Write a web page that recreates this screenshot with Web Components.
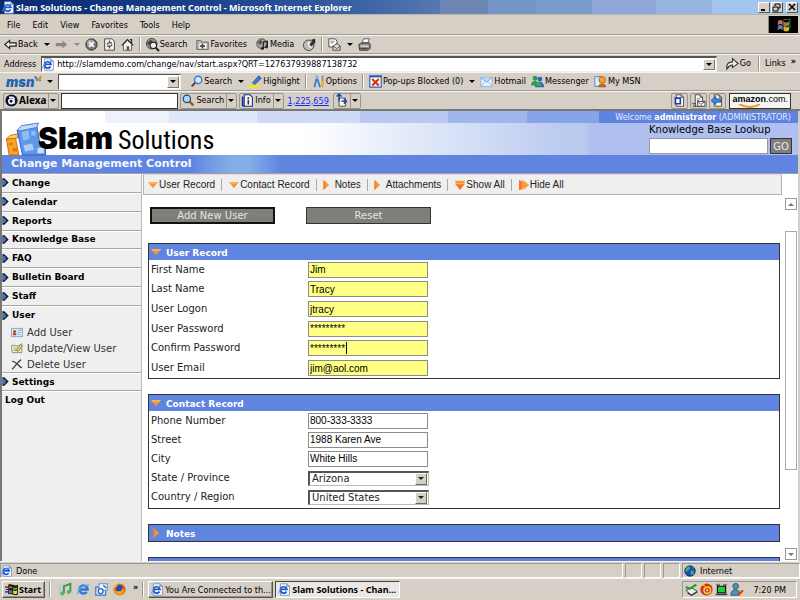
<!DOCTYPE html>
<html lang="en">
<head>
<meta charset="utf-8">
<title>Slam Solutions - Change Management Control</title>
<style>
html,body{margin:0;height:100%}
body{--face:#d6cfc5;--blue:#6085e0;--ui:"DejaVu Sans Condensed","DejaVu Sans",sans-serif;--uibold:"Noto Sans","Open Sans",sans-serif;--page:"DejaVu Sans",sans-serif;--arial:"Liberation Sans",Arial,sans-serif;font-family:var(--ui);font-size:9px;color:#000;background:var(--face);overflow:hidden}
</style>
</head>
<body>
<desktop-shell></desktop-shell>
<script>
const ie='<path d="M3 1h8l3 3v11H3z" fill="#fff" stroke="#6d86b5"/><path d="M11 1v3h3" fill="none" stroke="#6d86b5"/><path d="M10.500 10.500A4 4 0 1 1 11 7.800H4" fill="none" stroke="#1c55cc" stroke-width="2.200"/><path d="M1 13C0 9 7 3 13 4" fill="none" stroke="#4b9bea" stroke-width="1.200"/>';
const pageIcon='<path d="M4 1h6l3 3v11H4z" fill="#fff" stroke="#333"/><path d="M10 1v3h3" fill="none" stroke="#333"/>';
const ICONS={
ie,
blueE:'<path d="M12 11A5 5 0 1 1 13 8H4" fill="none" stroke="#2a78d8" stroke-width="3"/><path d="M1 14C-1 9 8 1 15 3" fill="none" stroke="#5ab0f0" stroke-width="1.500"/>',
back:'<path d="M1 8l6-5v3h8v4H7v3z" fill="#f4f2ee" stroke="#222" stroke-width="1.400"/>',
fwd:'<path d="M15 8L9 3v3H1v4h8v3z" fill="#8b8881"/>',
stop:'<circle cx="8" cy="8" r="7" fill="#777" stroke="#222"/><circle cx="7" cy="6.500" r="4.500" fill="#aaa"/><path d="M5 5l6 6M11 5l-6 6" stroke="#fff" stroke-width="1.800"/>',
refresh:'<path d="M2 1h9l3 3v11H2z" fill="#eee" stroke="#333"/><path d="M8 3v3h3M8 13v-3H5M8 6a3 3 0 0 0-3 2M8 10a3 3 0 0 0 3-2" fill="none" stroke="#444" stroke-width="1.300"/>',
home:'<path d="M1 9l7-7 7 7" fill="none" stroke="#222" stroke-width="1.500"/><path d="M3 8v7h10V8L8 3z" fill="#f5f5f5" stroke="#444"/><path d="M7 10h3v5H7z" fill="#555"/><path d="M11 2h2v4" fill="none" stroke="#333" stroke-width="1.500"/>',
globeSearch:'<circle cx="7" cy="7" r="6.500" fill="#999" stroke="#333"/><path d="M1 6l5-4 2 2-5 5z" fill="#444"/><circle cx="9" cy="9" r="4" fill="#eee" stroke="#222" stroke-width="1.400"/><path d="M12 12l4 4" stroke="#222" stroke-width="2.400"/>',
favs:'<path d="M1 3h5l1 2h8v9H1z" fill="#bbb" stroke="#555"/><path d="M4 7h9v6H4z" fill="#f3f3f3"/><path d="M8 7v6M5 10h6" stroke="#444" stroke-width="2"/>',
media:'<circle cx="7" cy="7" r="6" fill="#aaa" stroke="#333"/><path d="M2 5l4-3 2 3-3 4z" fill="#555"/><path d="M9 13V5l5-1v7" fill="none" stroke="#222" stroke-width="1.500"/><circle cx="8" cy="13" r="1.800" fill="#222"/><circle cx="13" cy="11" r="1.800" fill="#222"/>',
history:'<circle cx="7" cy="9" r="6.500" fill="#bbb" stroke="#333"/><path d="M7 9l6-7 2 4-5 4z" fill="#333"/><path d="M7 5v4l3 3" fill="none" stroke="#fff" stroke-width="1.800"/><path d="M10 2l5-1v5z" fill="#222"/>',
mail:'<path d="M1 1h8l2 3v7H1z" fill="#fff" stroke="#333"/><path d="M3 4h5M3 6h4" stroke="#777"/><path d="M6 10l5-3 4 3v5H6z" fill="#ddd" stroke="#333"/><path d="M6 10l5 3 4-3" fill="none" stroke="#444"/>',
print:'<path d="M5 6l2-5h7l-2 5z" fill="#fff" stroke="#444"/><path d="M1 8l3-2h10l1 2v5l-3 2H2z" fill="#888" stroke="#222"/><path d="M3 10h10" stroke="#eee" stroke-width="1.500"/><path d="M3 13h9" stroke="#333"/>',
go:'<path d="M1 15C0 9 3 6 8 6V2l7 6-7 5v-3c-4 0-5 2-7 5z" fill="#eee" stroke="#333" stroke-width="1.300"/>',
mag:'<path d="M7 9l-5 5" stroke="#6a3f20" stroke-width="2.500"/><circle cx="10" cy="6" r="4.500" fill="#cfe7ff" stroke="#3c78d8" stroke-width="1.700"/>',
magDark:'<circle cx="6" cy="6" r="4.500" fill="#a8dcf5" stroke="#1c4a80" stroke-width="1.500"/><path d="M9 9l5 5" stroke="#a05a20" stroke-width="3"/>',
pen:'<path d="M1 12h12v3H1z" fill="#ffe800"/><path d="M4 10l8-9 3 3-8 8z" fill="#3c78d8" stroke="#24489c"/><path d="M4 10l3 2-5 2z" fill="#f8d800"/>',
tools:'<path d="M3 15L6 3l4 12" fill="none" stroke="#3576d0" stroke-width="2"/><circle cx="6" cy="3" r="2" fill="#7db4f0"/><path d="M13 1v7" stroke="#888" stroke-width="2"/><path d="M13 8v7" stroke="#f0b010" stroke-width="3"/>',
popup:'<path d="M1 1h14v14H1z" fill="#fff" stroke="#2c5fc0" stroke-width="1.500"/><path d="M1 2h14" stroke="#2c5fc0" stroke-width="2"/><path d="M4 5l8 8M12 5l-8 8" stroke="#e02810" stroke-width="2.500"/>',
hotmail:'<path d="M1 3h14v11H1z" fill="#eaf4ff" stroke="#83aee8"/><path d="M1 3l7 6 7-6" fill="#bcd8fa" stroke="#5d91dd"/><path d="M1 14l5-6M15 14l-5-6" stroke="#83aee8"/>',
msgr:'<circle cx="5" cy="4" r="3" fill="#2f9c45"/><path d="M0 13c0-8 9-8 10 0z" fill="#2f9c45"/><circle cx="11" cy="5" r="3" fill="#2c62c8"/><path d="M5 15c0-9 11-9 11 0z" fill="#2c62c8"/><path d="M6 13c0-6 7-6 7 1z" fill="#38b04c"/>',
mymsn:'<path d="M1 2h9v12H1z" fill="#dcecff" stroke="#3a78d0"/><circle cx="10" cy="6" r="4" fill="#f6a21c" stroke="#b85b10"/><path d="M5 15c0-6 10-6 10 0z" fill="#e44c20"/><path d="M8 11l2 4 2-4z" fill="#3cae4a"/>',
info:'<path d="M2 3v11l2 1" fill="none" stroke="#1428a0" stroke-width="2"/><path d="M4 1h7l3 3v11H4z" fill="#fffbd8" stroke="#1428a0" stroke-width="1.300"/><path d="M9 7v6M9 4v2" stroke="#1428a0" stroke-width="2"/>',
related:'<path d="M5 5h8v10H5z" fill="#fffbd8" stroke="#333"/><path d="M5 0v9M2 3l3-3 3 3M8 9h6M11 6l3 3-3 3" fill="none" stroke="#1840c8" stroke-width="1.800"/>',
alexa1:pageIcon+'<path d="M3 5h6v7H3z" fill="#fff" stroke="#1c3aa8" stroke-width="2"/>',
alexa2:pageIcon+'<path d="M6 6h4M6 8h2" stroke="#555"/><path d="M7 9h9v6H7z" fill="#fff" stroke="#222"/><path d="M7 9l4 4 5-4M0 12h5M1 15h4" fill="none" stroke="#222"/>',
alexa3:pageIcon.replace('#fff','#fffbd8')+'<path d="M0 8l6-5v3h6v4H6v3z" fill="#3c86e8" stroke="#1748a8"/>',
win:'<path d="M1 4c3-2 4-2 6 0v5c-2-2-3-2-6 0z" fill="#b07860"/><path d="M8 4c2 2 4 2 7 0v5c-3 2-5 2-7 0z" fill="#3cae3a"/><path d="M8 4c1 1 2 2 3 2v5c-1 0-2 0-3-1z" fill="#e85030"/><path d="M1 10c3-2 4-2 6 0v5c-2-2-3-2-6 0z" fill="#5c80b8"/><path d="M8 10c2 2 4 2 7 0v5c-3 2-5 2-7 0z" fill="#d8b828"/><path d="M7 3c3-3 6 1 9-2v11" fill="none" stroke="#777"/>',
start:'<path d="M0 5h4M1 8h3M0 11h4" stroke="#222" stroke-width="1.500"/><path d="M4 2c4-2 8 3 12 0v12c-4 3-8-2-12 0z" fill="#111"/><path d="M5 4c2-1 3 0 4 0v3c-1 0-2-1-4 0z" fill="#f04020"/><path d="M10 5c2 1 3 1 5 0v3c-2 1-3 1-5 0z" fill="#38b038"/><path d="M5 9c2-1 3 0 4 0v4c-1 0-2-1-4 0z" fill="#3078e8"/><path d="M10 9c2 1 3 1 5 0v4c-2 1-3 1-5 0z" fill="#f8d020"/>',
down:'<path d="M0 3h16L8 13z" fill="#f5952c"/><path d="M0 3h16l-2 3H3z" fill="#f8b45c"/>',
right:'<path d="M4 0l9 8-9 8z" fill="#f59a35"/><path d="M4 0v16l3-3V3z" fill="#f08420"/>',
downs:'<path d="M0 1h16l-2 6H2z" fill="#f59a35"/><path d="M0 6h16L8 16z" fill="#f07a1c"/><path d="M1 6h14" stroke="#fbc070" stroke-width="1.500"/>',
rights:'<path d="M0 0l4 1 5 7-5 7-4 1z" fill="#f07a1c"/><path d="M6 0l10 8-10 8z" fill="#f59a35" stroke="#fbc070"/>',
nav:'<path d="M0 0l4 1 7 7-7 7-4 1z" fill="#0c1c3c"/><path d="M1 3l3 1 3 4-3 4-3 1z" fill="#3f76b8"/>',
card:'<path d="M0 2h16v12H0z" fill="#dcebfa" stroke="#6a88b0"/><path d="M2 12V9h5v3z" fill="#c03818"/><circle cx="4.500" cy="6.500" r="2.200" fill="#a85020"/><path d="M9 5h5M9 8h5M9 11h4" stroke="#6a98d0"/><path d="M12 3h3v3z" fill="#f8c040"/>',
edit:'<path d="M0 4l5-1 1 1h9v10H1z" fill="#f6f1c8" stroke="#666"/><path d="M3 7h6M3 9h4M3 11h5" stroke="#8a9a70"/><path d="M7 11l6-9 3 2-6 8z" fill="#f0e048" stroke="#555"/><path d="M12 2l3-2 1 3z" fill="#60b050"/>',
del:'<path d="M1 3c6 1 9 7 14 10M14 1C9 4 6 10 1 15" fill="none" stroke="#444" stroke-width="2"/>',
note:'<path d="M6 13V4l8-3v10" fill="none" stroke="#3f9a50" stroke-width="2.400"/><circle cx="4" cy="13" r="2.600" fill="#58b868"/><circle cx="12" cy="11" r="2.600" fill="#58b868"/><path d="M1 2v10" stroke="#a8c4e8" stroke-width="2"/>',
outlook:'<path d="M1 5h12v10H1z" fill="#eaf4ff" stroke="#3078c8" stroke-width="1.500"/><path d="M5 1h10v8H5z" fill="#fff" stroke="#3078c8"/><circle cx="7" cy="10" r="3" fill="#fff" stroke="#2060c0" stroke-width="1.500"/><path d="M10 3l4 3" stroke="#3078c8" stroke-width="2"/>',
firefox:'<circle cx="8" cy="8" r="7.500" fill="#e86a10"/><circle cx="8" cy="7" r="4.600" fill="#2850a8"/><path d="M1 6c1 5 5 4 7 4s4-2 3-4c3 1 3 6-1 8-5 2-9-2-9-8z" fill="#f8a020"/><path d="M1 7C1 3 4 1 6 1L5 4z" fill="#f8b828"/>',
globe:'<circle cx="8" cy="8" r="7" fill="#1c48c0" stroke="#0a2060"/><path d="M3 4c3-3 5-2 5 0S5 7 4 9 1 8 3 4zM9 8c3-2 5 0 4 3s-4 3-4 0zM10 2l3 2-2 1z" fill="#40b848"/>',
safe:'<path d="M1 9l7-3 7 4-7 5z" fill="#eee" stroke="#333"/><path d="M1 5l5 2 8-5" fill="none" stroke="#18a028" stroke-width="2.500"/><path d="M3 12l5 3 7-4" fill="none" stroke="#333" stroke-width="1.500"/>',
alarm:'<circle cx="8" cy="8" r="7.500" fill="#d83018"/><circle cx="9" cy="9" r="5" fill="#f8c838"/><circle cx="9" cy="9" r="3" fill="#d83018"/><circle cx="9" cy="9" r="1.200" fill="#fff"/><path d="M2 2l4 1" stroke="#f8c838" stroke-width="2"/>',
net:'<path d="M2 1l2 4M14 1l-2 4M5 1v3M11 1v3" stroke="#222" stroke-width="1.200"/><path d="M3 4h10v8H3z" fill="#20d040" stroke="#111" stroke-width="1.500"/><path d="M1 13h14v2H1z" fill="#333"/>',
buddy:'<circle cx="7" cy="4" r="3.500" fill="#5890b8" stroke="#24506c"/><path d="M1 15c0-9 11-9 11 0z" fill="#5890b8" stroke="#24506c"/><path d="M10 15l6-6" stroke="#e02020" stroke-width="2"/><path d="M12 16l4-3" stroke="#f8d020" stroke-width="2"/><path d="M9 11l3-2" stroke="#30b040" stroke-width="2"/>',
alexaA:'<circle cx="8" cy="8" r="7.500" fill="#0b1038"/><circle cx="7.500" cy="9" r="2.800" fill="none" stroke="#fff" stroke-width="2"/><path d="M5 4h4c2 0 2 1 2 3v5" fill="none" stroke="#fff" stroke-width="2"/>',
butterfly:'<path d="M8 8C4 0 0 1 1 5c1 3 4 4 7 5z" fill="#2f78d0"/><path d="M9 8c1-8 6-8 6-4s-3 6-6 6z" fill="#f08a1c"/><path d="M9 9c4-1 6 0 5 3-2 3-5 0-5-3z" fill="#3cae4a"/><path d="M8 9c-3-1-5 1-3 3 2 1 3-1 3-3z" fill="#e04828"/>',
cubes:'<path d="M1 18l10-2 4 20H4z" fill="#f8a820" stroke="#c85c18"/><path d="M1 18l4-4 10-2-2 5z" fill="#fdd060" stroke="#c85c18"/><path d="M4 22h4v3H4zM8 28h5v4H8z" fill="#e87818"/><path d="M13 8l22-5 4 22 6 3v8H19z" fill="#5f97ea" stroke="#2458c0"/><path d="M13 8l5-5 19-3-2 5-19 4z" fill="#c4dcfb" stroke="#3a70d4"/><path d="M18 10l8-2 1 10-7 2zM29 9h5v5h-5z" fill="#8fbcf6"/><path d="M20 25l10-2 2 7-10 2z" fill="#a9ccfa"/><path d="M36 28h7v6h-7z" fill="#cfe0fa"/>'
};
const BOXES={cubes:'0 0 46 36',nav:'0 0 11 16'};
function define(name,css,html,after){
  const t=document.createElement('template');
  t.innerHTML='<style>*{box-sizing:border-box}'+css+'</style>'+html;
  customElements.define(name,class extends HTMLElement{
    constructor(){super();this.attachShadow({mode:'open'})}
    connectedCallback(){if(this.shadowRoot.childNodes.length)return;this.shadowRoot.append(t.content.cloneNode(true));if(after)after(this,this.shadowRoot)}
  });
}
define('ui-icon',':host{display:inline-flex;flex:none;width:13px;height:13px}svg{width:100%;height:100%;overflow:visible}','<svg viewBox="0 0 16 16" aria-hidden="true"></svg>',(el,r)=>{
  const s=r.querySelector('svg'),n=el.getAttribute('name');if(BOXES[n])s.setAttribute('viewBox',BOXES[n]);s.innerHTML=ICONS[n]||'';
});
define('drop-arrow',':host{display:inline-block;flex:none;width:0;height:0;border:3px solid transparent;border-top-color:currentColor;border-bottom:0}','');
define('tool-sep',':host{display:block;flex:none;width:2px;height:15px;border-left:1px solid #9b968c;border-right:1px solid #fff}','');
define('tool-row',':host{display:flex;align-items:center;flex:none;border-top:1px solid #f6f4f0;border-bottom:1px solid #a19c93;height:19px;padding:0 4px;white-space:nowrap}','<slot></slot>');
define('tool-button',':host{display:flex;flex:none}button{display:flex;align-items:center;gap:1px;padding:0;margin:0;border:0;background:none;font:inherit;color:inherit;white-space:nowrap;line-height:13px}:host([framed]) button{border:1px solid #9b968c;border-radius:2px;height:16px;padding:0 1px}.arrow{display:flex;align-items:center;padding-left:5px}:host([framed]) .arrow{height:14px;padding:0 1px;margin-left:1px;border-left:1px solid #9b968c}','<button type="button"><ui-icon></ui-icon><slot></slot></button>',(el,r)=>{
  const b=r.querySelector('button'),i=r.querySelector('ui-icon'),n=el.getAttribute('icon');
  if(n){const x=document.createElement('ui-icon');x.setAttribute('name',n);i.replaceWith(x)}else i.remove();
  if(el.hasAttribute('label'))b.setAttribute('aria-label',el.getAttribute('label'));
  if(el.hasAttribute('drop')){const s=document.createElement('span');s.className='arrow';s.append(document.createElement('drop-arrow'));b.append(s)}
});
define('combo-field',':host{display:flex;height:16px;background:#fff;border:1px solid #555;border-right-color:#eee;border-bottom-color:#eee}input{flex:1;min-width:0;width:10px;border:0;padding:0 2px;margin:0;background:none;font:inherit;outline:0}button{width:12px;padding:0;margin:1px;border:1px solid #777;border-top-color:#fff;border-left-color:#fff;background:var(--face);display:flex;align-items:center;justify-content:center}','<slot name="icon"></slot><input type="text"><button type="button" aria-label="Open list"><drop-arrow></drop-arrow></button>',(el,r)=>{
  const i=r.querySelector('input');i.setAttribute('aria-label',el.getAttribute('label'));i.value=el.getAttribute('value')||'';if(el.hasAttribute('plain'))r.querySelector('button').remove();
});
define('title-bar',`:host{display:flex;align-items:center;flex:none;height:15px;padding:0 2px;gap:1px;color:#fff;font:700 9px/13px var(--uibold);white-space:nowrap;border-bottom:1px solid #b9b6ae;
background:linear-gradient(90deg,#0c2a72 0,#12347c 12%,#1c4289 26%,#2c5499 38%,#4067a6 47%,#5878b2 55%,#6d87b4 55% 61%,#7494c6 61% 67%,#7b9ccb 67% 74%,#8ea9d8 74% 82%,#98b5e1 82% 89%,#a2c4ee 89%)}
h1{font:inherit;margin:0;flex:1}button{width:12px;height:11px;padding:0;border:1px solid #555;border-top-color:#fff;border-left-color:#fff;background:var(--face);display:flex}button:last-child{margin-left:2px}svg{width:10px;height:9px}`,
`<ui-icon name="ie"></ui-icon><h1>Slam Solutions - Change Management Control - Microsoft Internet Explorer</h1>
<button type="button" aria-label="Minimize"><svg viewBox="0 0 10 9"><path d="M2 7h4" stroke="#000" stroke-width="2"/></svg></button><button type="button" aria-label="Restore"><svg viewBox="0 0 10 9"><path d="M3 3V1h5v4H6M1 4h5v4H1z" fill="none" stroke="#000"/></svg></button><button type="button" aria-label="Close"><svg viewBox="0 0 10 9"><path d="M2 1l6 6M8 1L2 7" stroke="#000" stroke-width="1.500"/></svg></button>`);
define('menu-bar',':host{display:flex;flex:none;height:20px;padding:1px 2px 1px 1px;border-bottom:1px solid #a19c93}nav{display:flex;flex:1;align-items:center;gap:12px;padding-left:6px;border-right:1px solid #8d887f}button{border:0;padding:0;background:none;font:inherit}div{width:29px;background:#000;display:flex;align-items:center;justify-content:center}',
'<nav><button>File</button><button>Edit</button><button>View</button><button>Favorites</button><button>Tools</button><button>Help</button></nav><div><ui-icon name="win"></ui-icon></div>');
define('address-bar',':host{display:flex;flex:none;align-items:center;height:18px;padding:0 4px;gap:5px;border-top:1px solid #f6f4f0;white-space:nowrap}combo-field{flex:1;border-color:#555 #eee #eee #555;border-top-width:2px}.go{margin:0 2px 0 4px}.more{font-weight:700;line-height:12px;align-self:flex-start}',
'<span>Address</span><combo-field label="Address" value="http://slamdemo.com/change/nav/start.aspx?QRT=127637939887138732"><ui-icon slot="icon" name="ie"></ui-icon></combo-field><tool-button class="go" icon="go">Go</tool-button><tool-sep></tool-sep><tool-button>Links</tool-button><span class="more">»</span>');
define('browser-chrome',`:host{display:block;flex:none;border-bottom:2px solid #777}
.std{gap:5px}.msn{gap:5px;padding-left:6px}.alexa{gap:2px;height:18px;border-bottom:0;padding-left:3px}
.wide{margin-left:4px}
.brand{display:flex;align-items:center;font:italic 900 13px/16px Inter,var(--arial);color:#1b64b0}.brand ui-icon{width:8px;height:10px;margin-bottom:5px}
.msn combo-field{width:123px}.alexa combo-field{width:117px;border-color:#333}.alexaname{font:700 10px/13px var(--uibold)}
a{color:#0c2cff;margin:0 2px}.fill{flex:1}
.amazon{display:flex;flex-direction:column;border:1px solid #333;background:#f4f4f4;height:16px;padding:0 2px;font:9px/10px var(--arial);color:#000;margin:0 5px 0 1px}.amazon svg{width:34px;height:4px;margin-left:6px}`,
`<menu-bar></menu-bar>
<tool-row class="std"><tool-button icon="back" drop>Back</tool-button><tool-button icon="fwd" drop label="Forward" style="color:#888"></tool-button><tool-button icon="stop" label="Stop"></tool-button><tool-button icon="refresh" label="Refresh"></tool-button><tool-button icon="home" label="Home"></tool-button><tool-sep></tool-sep><tool-button icon="globeSearch">Search</tool-button><tool-button class="wide" icon="favs">Favorites</tool-button><tool-button class="wide" icon="media">Media</tool-button><tool-button class="wide" icon="history" label="History"></tool-button><tool-sep></tool-sep><tool-button icon="mail" drop label="Mail"></tool-button><tool-button icon="print" label="Print"></tool-button></tool-row>
<address-bar></address-bar>
<tool-row class="msn"><span class="brand">msn<ui-icon name="butterfly"></ui-icon></span><drop-arrow></drop-arrow><combo-field label="MSN search"></combo-field><tool-button class="wide" icon="mag" drop>Search</tool-button><tool-button icon="pen">Highlight</tool-button><tool-sep></tool-sep><tool-button icon="tools">Options</tool-button><tool-sep></tool-sep><tool-button icon="popup" drop>Pop-ups Blocked (0)</tool-button><tool-button icon="hotmail">Hotmail</tool-button><tool-button icon="msgr">Messenger</tool-button><tool-button icon="mymsn">My MSN</tool-button></tool-row>
<tool-row class="alexa"><tool-button framed drop icon="alexaA"><span class="alexaname">Alexa</span></tool-button><combo-field plain label="Alexa search"></combo-field><tool-button framed drop icon="magDark">Search</tool-button><tool-button framed drop icon="info">Info</tool-button><a href="#">1,225,659</a><tool-button framed drop icon="related" label="Related links"></tool-button><span class="fill"></span><tool-button framed icon="alexa1" label="Site"></tool-button><tool-button framed icon="alexa2" label="Send page"></tool-button><tool-button framed icon="alexa3" label="Previous"></tool-button><div class="amazon"><span><b>amazon</b>.com.</span><svg viewBox="0 0 34 4"><path d="M1 0c8 4 15 4 21 0" fill="none" stroke="#f59a20" stroke-width="2"/></svg></div></tool-row>`);
define('slam-header',`:host{display:block;flex:none;font-family:var(--page)}
.welcome{height:12px;line-height:13px;font-size:8px;color:#e4ebff;text-align:right;padding-right:7px;background:linear-gradient(90deg,#fff 0 13%,#eef2fc 13% 21%,#e0e7f9 21% 32%,#cfdaf6 32% 45%,#b9c9f2 45% 56%,#a0b6ed 56% 66%,#88a4e8 66% 75%,#5f83df 75%)}
.welcome b{color:#fff}
.mid{display:flex;height:32px;padding:0 6px 0 1px;background:linear-gradient(90deg,#fff 0 38%,#f1f5fd 44%,#dde6f8 54%,#cbd7f4 63%,#bccbf0 70% 73%,#afbff0 74%)}
.logo{display:flex;flex:1;align-items:flex-end;color:#000}.logo ui-icon{width:46px;height:32px;margin:0 -11px 0 0}
.logo h2{position:relative;margin:0 0 -1px;display:flex;gap:5px;align-items:baseline;line-height:32px;font-weight:400;white-space:nowrap}
.slam{font:900 30px/32px Inter,var(--arial)}.sol{font:26px/32px "Liberation Sans Narrow","Roboto Condensed",var(--arial)}
form{display:grid;grid-template-columns:119px 22px;gap:1px 2px;font-size:10px;align-content:start}label{grid-column:1/-1;line-height:14px;white-space:nowrap}
input{height:16px;width:100%;border:1px solid #999;padding:0 2px}button{height:16px;padding:0;border:1px solid #333;background:#807e79;color:#e8e8e8;font:10px var(--page)}
.bar{height:19px;line-height:17px;padding-left:9px;color:#f4f7ff;font-size:11px;font-weight:700;border-bottom:1px solid #a0a0a0;background:linear-gradient(90deg,#6085e0 24%,#7099e3 26%,#85aee8 29% 31%,#739be4 33%,#6085e0 35%)}`,
`<div class="welcome">Welcome <b>administrator</b> (ADMINISTRATOR)</div>
<div class="mid"><div class="logo"><ui-icon name="cubes"></ui-icon><h2><span class="slam">Slam</span><span class="sol">Solutions</span></h2></div>
<form><label for="kb">Knowledge Base Lookup</label><input id="kb" type="text"><button type="button">GO</button></form></div><div class="bar">Change Management Control</div>`);
define('nav-item',':host{display:flex;align-items:center;border-bottom:1px solid #aaa7a0;box-shadow:inset 0 1px #fff;font-weight:700;min-height:18px}:host([open]){border-bottom:0}ui-icon{width:7px;height:9px;margin-right:3px}a{color:#000;text-decoration:none}:host([bare]){border:0}','<ui-icon name="nav"></ui-icon><a href="#"><slot></slot></a>',(el,r)=>{if(el.hasAttribute('bare'))r.querySelector('ui-icon').remove()});
define('nav-sub',':host{display:flex;align-items:center;gap:4px;padding-left:9px;height:16px;font-size:10px}ui-icon{width:12px;height:11px}a{color:#333;text-decoration:none}','<ui-icon></ui-icon><a href="#"><slot></slot></a>',(el,r)=>{const x=document.createElement('ui-icon');x.setAttribute('name',el.getAttribute('icon'));r.querySelector('ui-icon').replaceWith(x)});
define('side-nav',':host{display:block;flex:none;width:140px;background:#efefef;border-right:1px solid #bbb;font-family:var(--page)}.top{display:grid;grid-auto-rows:1fr;min-height:132px}.subs{border-bottom:1px solid #aaa7a0}nav nav-item[bare]{padding-left:3px}',
`<nav><div class="top"><nav-item>Change</nav-item><nav-item>Calendar</nav-item><nav-item>Reports</nav-item><nav-item>Knowledge Base</nav-item><nav-item>FAQ</nav-item><nav-item>Bulletin Board</nav-item><nav-item>Staff</nav-item></div><nav-item open>User</nav-item><div class="subs"><nav-sub icon="card">Add User</nav-sub><nav-sub icon="edit">Update/View User</nav-sub><nav-sub icon="del">Delete User</nav-sub></div><nav-item>Settings</nav-item><nav-item bare>Log Out</nav-item></nav>`);
define('section-tools',':host{display:flex;align-items:center;height:21px;flex:none;margin:0 16px 0 1px;padding-left:4px;background:#efefef;border:1px solid #b5b3ad;border-top-color:#ddd;font:10px var(--arial)}ui-icon{width:10px;height:10px}button{display:flex;align-items:center;gap:1px;border:0;background:none;padding:0;font:inherit;color:#222;white-space:nowrap}i{width:1px;height:12px;background:#aaa;margin:0 7px 0 6px}i.s{margin-right:4px}.wide{gap:4px}',
`<button><ui-icon name="down"></ui-icon>User Record</button><i></i><button><ui-icon name="down"></ui-icon>Contact Record</button><i class="s"></i><button class="wide"><ui-icon name="right"></ui-icon>Notes</button><i class="s"></i><button class="wide"><ui-icon name="right"></ui-icon>Attachments</button><i></i><button><ui-icon name="downs"></ui-icon>Show All</button><i></i><button><ui-icon name="rights"></ui-icon>Hide All</button>`);
define('form-panel',':host{display:block;border:1px solid #333;background:#fff}h3{display:flex;align-items:center;gap:5px;margin:0;height:16px;padding:2px 0 0 2px;background:var(--blue);color:#fff;font:700 9px/14px var(--page)}ui-icon{width:10px;height:10px;margin-bottom:3px}.rows{display:grid;grid-auto-rows:1fr;min-height:var(--rows,0px);padding-bottom:var(--pad,0px)}','<h3><ui-icon></ui-icon><span></span></h3><div class="rows"><slot></slot></div>',(el,r)=>{r.querySelector('span').textContent=el.getAttribute('heading')||'';const x=document.createElement('ui-icon');x.setAttribute('name',el.hasAttribute('closed')?'right':'down');r.querySelector('ui-icon').replaceWith(x)});
define('form-row',`:host{display:grid;grid-template-columns:157px 122px;align-items:center;padding-left:2px;font:10px/14px var(--page);color:#222}
input{width:120px;height:16px;border:1px solid #8c8c8c;padding:0 1px;margin:0;font:10px var(--arial);background:#fff;color:#000}:host([required]) input{background-color:#ffff84}
:host([caret]) input{background-image:linear-gradient(#000,#000);background-size:1px 12px;background-repeat:no-repeat;background-position:37px 1px}
div{position:relative}select{display:block;width:121px;height:15px;appearance:none;border:1px solid #bbb;border-top:2px solid #555;border-left:2px solid #555;border-radius:0;background:#fff;font:10px/12px var(--page);padding:0 2px;margin:0;color:#222}.knob{position:absolute;right:3px;top:2px;width:12px;height:12px;border:1px solid #666;border-top-color:#fff;border-left-color:#fff;background:var(--face);display:flex;align-items:center;justify-content:center;pointer-events:none}`,
'<label for="f"><slot></slot></label><div></div>',(el,r)=>{const d=r.querySelector('div');if(el.hasAttribute('select')){d.innerHTML='<select id="f"><option></option></select><span class="knob"><drop-arrow></drop-arrow></span>';r.querySelector('option').textContent=el.getAttribute('value')}else{d.innerHTML='<input id="f" type="text">';r.querySelector('input').value=el.getAttribute('value')}});
define('scroll-bar',':host{display:flex;flex-direction:column;flex:none;width:12px;margin:3px 1px 1px 0}button{width:12px;height:12px;padding:0;border:1px solid #999;background:#fff;display:flex;align-items:center;justify-content:center;color:#777}.up{transform:rotate(180deg)}.track{flex:1;display:grid;grid-template-rows:21fr 240fr 78fr}.thumb{grid-row:2;border:1px solid #aaa;background:#fff}','<button type="button" aria-label="Scroll up"><drop-arrow class="up"></drop-arrow></button><div class="track"><div class="thumb"></div></div><button type="button" aria-label="Scroll down"><drop-arrow></drop-arrow></button>');
define('user-form',':host{display:flex;flex:1;min-height:0;overflow:hidden}form{flex:1;min-width:0;padding:12px 5px 0 6px;display:flex;flex-direction:column}.buttons{display:flex;gap:31px;padding-left:2px;margin-bottom:19px}.buttons button{width:125px;height:17px;border:1px solid #333;background:#807e79;color:#e4e4e4;font:10px var(--page);padding:0}.buttons .main{border:2px solid #111}form-panel{margin-bottom:15px;flex:none}',
`<form><div class="buttons"><button class="main" type="button">Add New User</button><button type="button">Reset</button></div>
<form-panel heading="User Record" style="--rows:118px"><form-row required value="Jim">First Name</form-row><form-row required value="Tracy">Last Name</form-row><form-row required value="jtracy">User Logon</form-row><form-row required value="*********">User Password</form-row><form-row required caret value="*********">Confirm Password</form-row><form-row required value="jim@aol.com">User Email</form-row></form-panel>
<form-panel heading="Contact Record" style="--rows:97px;--pad:1px"><form-row value="800-333-3333">Phone Number</form-row><form-row value="1988 Karen Ave">Street</form-row><form-row value="White Hills">City</form-row><form-row select value="Arizona">State / Province</form-row><form-row select value="United States">Country / Region</form-row></form-panel>
<form-panel closed heading="Notes"></form-panel><form-panel closed></form-panel></form><scroll-bar></scroll-bar>`);
define('web-page',':host{display:flex;flex-direction:column;flex:1;min-height:0;background:#fff;border-left:2px solid #777;border-right:2px solid var(--face)}.body{display:flex;flex:1;min-height:0}main{display:flex;flex-direction:column;flex:1;min-width:0}','<slam-header></slam-header><div class="body"><side-nav></side-nav><main><section-tools></section-tools><user-form></user-form></main></div>');
define('status-bar',':host{display:flex;flex:none;height:17px;border-top:1px solid #f6f4f0;align-items:stretch;padding-top:1px;gap:2px}div{border:1px solid #999;border-right-color:#fff;border-bottom-color:#fff;display:flex;align-items:center;gap:3px}.msg{flex:1}.cell{width:17px}.zone{width:118px;padding-left:1px;gap:4px}ui-icon{width:12px;height:12px}','<div class="msg"><ui-icon name="ie"></ui-icon>Done</div><div class="cell"></div><div class="cell"></div><div class="cell"></div><div class="zone"><ui-icon name="globe"></ui-icon>Internet</div>');
define('task-bar',`:host{display:flex;flex:none;height:22px;align-items:center;border-top:1px solid #f6f4f0;padding:1px 3px 1px 2px;gap:4px}
button{display:flex;align-items:center;gap:1px;height:17px;padding:0 2px;font:inherit;white-space:nowrap;background:var(--face);border:1px solid #555;border-top-color:#fff;border-left-color:#fff;box-shadow:inset -1px -1px #98938a}
.start{font:700 9px/13px var(--uibold);width:43px}.task{width:125px}.on{font:700 9px/13px var(--uibold);background:#ebe8e3;border-color:#444 #fff #fff #444;box-shadow:none;margin-left:-2px}
.quick{display:flex;align-items:center;gap:5px;padding-left:4px}.more{padding:0 0 5px 2px;font-weight:700;line-height:9px}
.tray{margin-left:auto;width:115px;height:17px;display:flex;align-items:center;gap:2px;padding:0 10px 0 2px;border:1px solid #999;border-right-color:#fff;border-bottom-color:#fff}.tray span{margin-left:auto}`,
`<button class="start"><ui-icon name="start"></ui-icon>Start</button><tool-sep></tool-sep><div class="quick"><ui-icon name="note"></ui-icon><ui-icon name="blueE"></ui-icon><ui-icon name="outlook"></ui-icon><ui-icon name="firefox"></ui-icon><span class="more">»</span></div><tool-sep></tool-sep>
<button class="task"><ui-icon name="ie"></ui-icon>You Are Connected to th...</button><button class="task on"><ui-icon name="ie"></ui-icon>Slam Solutions - Chan...</button><div class="tray"><ui-icon name="safe"></ui-icon><ui-icon name="alarm"></ui-icon><ui-icon name="net"></ui-icon><ui-icon name="buddy"></ui-icon><span>7:20 PM</span></div>`);
define('desktop-shell',':host{display:flex;flex-direction:column;height:100vh}','<title-bar></title-bar><browser-chrome></browser-chrome><web-page></web-page><status-bar></status-bar><task-bar></task-bar>');
</script>
</body>
</html>
